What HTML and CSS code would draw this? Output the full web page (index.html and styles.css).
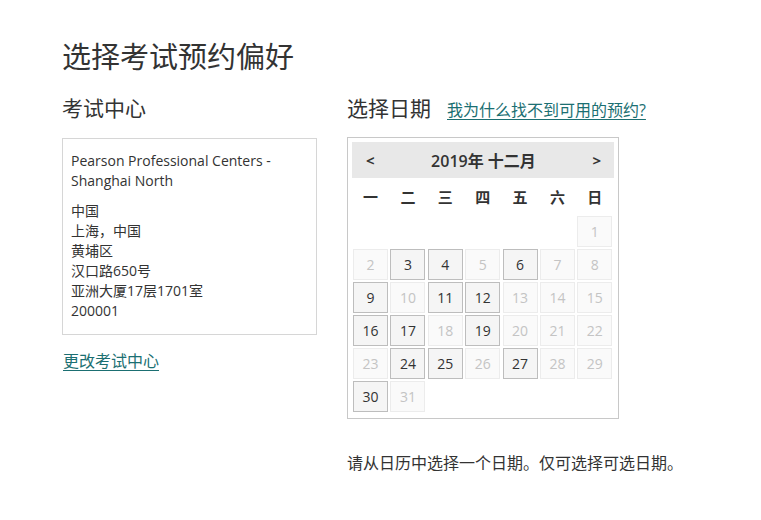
FILE: index.html
```
<!DOCTYPE html>
<html lang="zh">
<head>
<meta charset="utf-8">
<title>选择考试预约偏好</title>
<link rel="stylesheet" href="styles.css">
</head>
<body>
<div class="page">
  <h1 class="title">选择考试预约偏好</h1>
  <div class="columns">
    <div class="col-left">
      <h2 class="section-title">考试中心</h2>
      <div class="center-box">
        <div class="center-name">Pearson Professional Centers - Shanghai North</div>
        <div class="center-addr">
          <div>中国</div>
          <div>上海，中国</div>
          <div>黄埔区</div>
          <div>汉口路650号</div>
          <div>亚洲大厦17层1701室</div>
          <div>200001</div>
        </div>
      </div>
      <a class="link change-link" href="#">更改考试中心</a>
    </div>
    <div class="col-right">
      <div class="date-head">
        <h2 class="section-title">选择日期</h2>
        <a class="link why-link" href="#">我为什么找不到可用的预约?</a>
      </div>
      <div class="calendar">
        <div class="cal-header">
          <span class="nav">&lt;</span>
          <span class="month">2019年 十二月</span>
          <span class="nav">&gt;</span>
        </div>
        <div class="grid">
          <div class="wd">一</div><div class="wd">二</div><div class="wd">三</div><div class="wd">四</div><div class="wd">五</div><div class="wd">六</div><div class="wd">日</div>
          <div class="empty"></div><div class="empty"></div><div class="empty"></div><div class="empty"></div><div class="empty"></div><div class="empty"></div><div class="day off">1</div>
          <div class="day off">2</div><div class="day on">3</div><div class="day on">4</div><div class="day off">5</div><div class="day on">6</div><div class="day off">7</div><div class="day off">8</div>
          <div class="day on">9</div><div class="day off">10</div><div class="day on">11</div><div class="day on">12</div><div class="day off">13</div><div class="day off">14</div><div class="day off">15</div>
          <div class="day on">16</div><div class="day on">17</div><div class="day off">18</div><div class="day on">19</div><div class="day off">20</div><div class="day off">21</div><div class="day off">22</div>
          <div class="day off">23</div><div class="day on">24</div><div class="day on">25</div><div class="day off">26</div><div class="day on">27</div><div class="day off">28</div><div class="day off">29</div>
          <div class="day on">30</div><div class="day off">31</div>
        </div>
      </div>
      <p class="hint">请从日历中选择一个日期。仅可选择可选日期。</p>
    </div>
  </div>
</div>
</body>
</html>
```
FILE: styles.css
```
html, body {
  margin: 0;
  padding: 0;
  background: #ffffff;
}
body {
  font-family: "Open Sans", "Noto Sans CJK SC", sans-serif;
  color: #333333;
}
.page {
  padding: 36px 0 0 62px;
}
.title {
  margin: 0;
  font-family: "Noto Sans CJK SC", sans-serif;
  font-size: 29px;
  font-weight: 400;
  line-height: 38px;
  color: #333333;
}
.columns {
  display: flex;
  gap: 30px;
  margin-top: 19px;
}
.col-left {
  width: 255px;
}
.section-title {
  margin: 0;
  font-family: "Noto Sans CJK SC", sans-serif;
  font-size: 21px;
  font-weight: 400;
  line-height: 28px;
  color: #333333;
}
.center-box {
  margin-top: 17px;
  border: 1px solid #d6d6d6;
  padding: 12px 8px 13px 8px;
  font-size: 14px;
  line-height: 20px;
  color: #333333;
}
.center-name {
  margin-bottom: 10px;
}
.link {
  color: #1b6f72;
  text-decoration: underline;
  text-underline-offset: 3px;
}
.change-link {
  display: inline-block;
  margin-top: 15px;
  margin-left: 1px;
  font-size: 16px;
  line-height: 22px;
}
.date-head {
  display: flex;
  align-items: baseline;
  gap: 16px;
}
.why-link {
  font-size: 16px;
}
.calendar {
  margin-top: 16px;
  width: 262px;
  border: 1px solid #c8c8c8;
  padding: 4px 4px 6px 4px;
}
.cal-header {
  display: flex;
  justify-content: space-between;
  align-items: center;
  height: 36px;
  background: #e8e8e8;
  padding: 0 13px 0 14px;
  font-size: 16px;
  font-weight: 600;
  color: #333333;
}
.month {
  font-weight: 600;
}
.nav {
  font-size: 15px;
  font-weight: 700;
}
.grid {
  display: grid;
  grid-template-columns: repeat(7, 35px);
  column-gap: 2.4px;
  row-gap: 2px;
  padding-left: 1px;
}
.wd {
  height: 36px;
  display: flex;
  align-items: center;
  justify-content: center;
  font-size: 15px;
  font-weight: 700;
  color: #333333;
}
.empty {
  height: 31px;
}
.day {
  box-sizing: border-box;
  height: 31px;
  display: flex;
  align-items: center;
  justify-content: center;
  font-size: 14px;
}
.day.on {
  background: #f5f5f5;
  border: 1px solid #bdbdbd;
  color: #333333;
}
.day.off {
  background: #fafafa;
  border: 1px solid #ececec;
  color: #c4c4c4;
}
.hint {
  margin: 33px 0 0 0;
  font-size: 16px;
  line-height: 22px;
  color: #333333;
}
```
